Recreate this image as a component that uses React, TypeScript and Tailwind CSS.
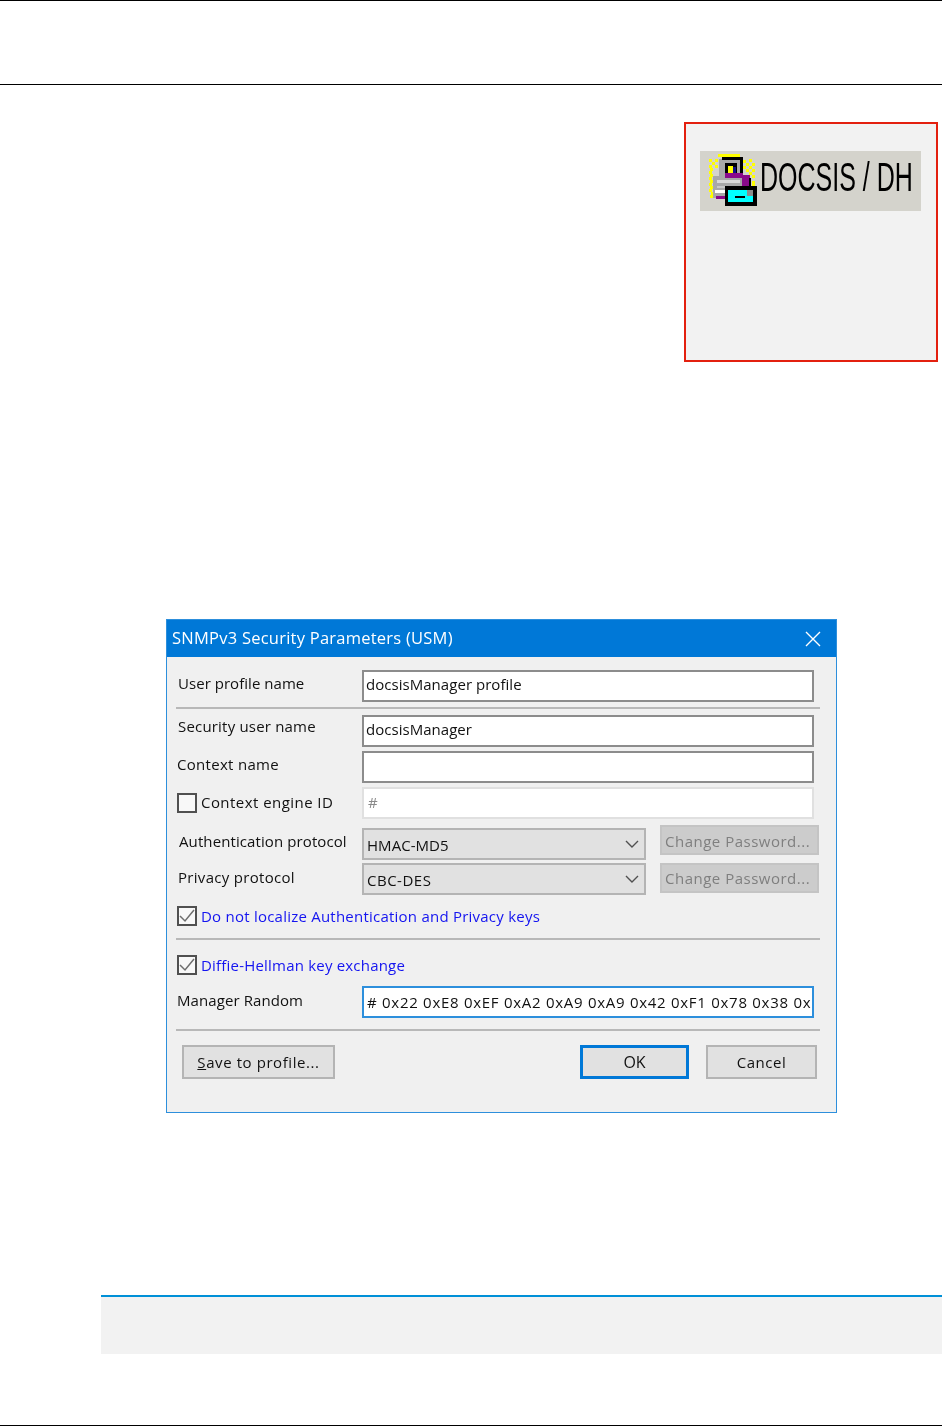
import React from "react";

// yellow halo pixels round the lock icon, in svg units
const halo = [
  [9, 11], [15, 11], [12, 14], [9, 17], [15, 17], [10, 20], [9, 23], [10, 26], [9, 29], [10, 32], [9, 35], [10, 38], [9, 41], [11, 44], [10, 47],
  [43, 12], [49, 11], [46, 15], [52, 15], [43, 18], [49, 18], [46, 21], [52, 21], [49, 24], [52, 27], [52, 33], [52, 36],
];

function LockIcon() {
  return (
    <svg width="50" height="54" viewBox="8 6 50 54" className="shrink-0 blur-[0.4px]" shapeRendering="crispEdges">
      <rect x="18" y="6" width="22" height="3" fill="#ffff00" />
      {halo.map(([x, y]) => (
        <rect key={`${x}-${y}`} x={x} y={y} width="3" height="3" fill="#ffff00" />
      ))}
      <rect x="19" y="11" width="21" height="18" fill="#a8a8a8" />
      <rect x="13" y="28" width="29" height="22" fill="#a8a8a8" />
      <rect x="22" y="9" width="21" height="3" fill="#000000" />
      <rect x="40" y="12" width="3" height="18" fill="#000000" />
      <rect x="25" y="15" width="12" height="12" fill="#000000" />
      <rect x="28" y="18" width="5" height="7" fill="#ffff00" />
      <rect x="33" y="19" width="3" height="6" fill="#10108a" />
      <rect x="25" y="25" width="18" height="5" fill="#8a0a8a" />
      <rect x="42" y="27" width="8" height="15" fill="#8a0a8a" />
      <rect x="49" y="30" width="2" height="10" fill="#000000" />
      <rect x="17" y="32" width="23" height="3" fill="#d8d8d8" />
      <rect x="17" y="38" width="8" height="2" fill="#c8c8c8" />
      <rect x="15" y="42" width="10" height="3" fill="#ffffff" />
      <rect x="16" y="48" width="10" height="3" fill="#8a0a8a" />
      <rect x="25" y="38" width="32" height="20" fill="#000000" />
      <rect x="28" y="42" width="25" height="12" fill="#00ffff" />
      <rect x="47" y="42" width="6" height="6" fill="#8c8c8c" />
      <rect x="35" y="48" width="10" height="2" fill="#000000" />
    </svg>
  );
}

function TextBox({ children, tone = "normal" }: { children?: React.ReactNode; tone?: "normal" | "disabled" | "focus" }) {
  const border = tone === "disabled" ? "border-[#e0e0e0] text-[#8a8a8a]" : tone === "focus" ? "border-[#2d8fdc] text-[#111111]" : "border-[#8c8c8c] text-[#111111]";
  return (
    <div className={`w-[452px] h-[32px] shrink-0 bg-white border-2 pl-[2px] flex items-center overflow-hidden whitespace-nowrap ${border}`}>
      {children}
    </div>
  );
}

function Combo({ children }: { children: React.ReactNode }) {
  return (
    <div className="w-[284px] h-[32px] shrink-0 bg-[#e1e1e1] border-2 border-[#b4b4b4] pl-[3px] pr-[5px] flex items-center justify-between text-[#111111]">
      {children}
      <svg width="14" height="8" viewBox="0 0 14 8" fill="none" stroke="#505050" strokeWidth="1.4">
        <path d="M1 1l6 6 6-6" />
      </svg>
    </div>
  );
}

function Check({ checked = false }: { checked?: boolean }) {
  return (
    <span className="w-[20px] h-[20px] shrink-0 border-2 border-[#505050] bg-[#f8f8f8] flex items-center justify-center">
      {checked && (
        <svg width="16" height="14" viewBox="0 0 16 14" fill="none" stroke="#6e6e6e" strokeWidth="1.5">
          <path d="M1 7l5 5 9-11" />
        </svg>
      )}
    </span>
  );
}

function Rule() {
  return <div className="h-[2px] ml-[9px] mr-[16px] bg-[#b8b8b8]" />;
}

function Disabled({ textClass }: { textClass: string }) {
  return (
    <div className="w-[159px] h-[30px] shrink-0 bg-[#cccccc] border-2 border-[#c4c4c4] pl-[3px] flex items-center text-[#7f7f7f] whitespace-nowrap tracking-[0.5px]">
      <span className={textClass}>Change Password...</span>
    </div>
  );
}

function Button({ children, className }: { children: React.ReactNode; className: string }) {
  return <div className={`h-[34px] bg-[#e1e1e1] flex items-center justify-center text-[#111111] ${className}`}>{children}</div>;
}

function SnmpDialog() {
  return (
    <div className="ml-[166px] mt-[257px] w-[671px] h-[494px] shrink-0 border border-[#2d8fdc] bg-[#f0f0f0] font-['Open_Sans',sans-serif] text-[15px] leading-[20px] blur-[0.45px]">
      <div className="h-[37px] bg-[#0078d7] text-white text-[16.5px] pl-[5px] flex items-center justify-between pr-[15px]">
        <span className="mb-[1px] tracking-[0.24px]">SNMPv3 Security Parameters (USM)</span>
        <svg width="16" height="16" viewBox="0 0 16 16" stroke="#ffffff" strokeWidth="1.4">
          <path d="M1 1l14 14M15 1L1 15" />
        </svg>
      </div>

      <div className="h-[13px]" />
      <div className="flex items-start h-[32px] pl-[11px]">
        <span className="w-[184px] mt-[3px] text-[#111111] tracking-[0.04px]">User profile name</span>
        <TextBox>
          <span className="mb-[4px] tracking-[0.04px]">docsisManager profile</span>
        </TextBox>
      </div>
      <div className="h-[5px]" />
      <Rule />
      <div className="h-[6px]" />
      <div className="flex items-start h-[32px] pl-[11px]">
        <span className="w-[184px] mt-[1px] text-[#111111] tracking-[0.19px]">Security user name</span>
        <TextBox>
          <span className="mb-[4px] tracking-[0.03px]">docsisManager</span>
        </TextBox>
      </div>
      <div className="h-[4px]" />
      <div className="flex items-start h-[32px] pl-[10px]">
        <span className="w-[185px] mt-[3px] text-[#111111] tracking-[0.3px]">Context name</span>
        <TextBox />
      </div>
      <div className="h-[4px]" />
      <div className="flex items-center h-[32px] pl-[10px]">
        <Check />
        <span className="w-[165px] pl-[4px] mb-[2px] text-[#111111] tracking-[0.45px]">Context engine ID</span>
        <TextBox tone="disabled">
          <span className="ml-[2px] mb-[2px]">#</span>
        </TextBox>
      </div>
      <div className="h-[6px]" />
      <div className="flex items-start h-[33px] pl-[12px]">
        <span className="w-[183px] mt-[6px] text-[#111111] tracking-[0.1px]">Authentication protocol</span>
        <div className="mt-[3px]">
          <Combo>
            <span className="mt-[1px] tracking-[0.05px]">HMAC-MD5</span>
          </Combo>
        </div>
        <div className="ml-[14px]">
          <Disabled textClass="mt-[1px]" />
        </div>
      </div>
      <div className="h-[5px]" />
      <div className="flex items-start h-[32px] pl-[11px]">
        <span className="w-[184px] mt-[4px] text-[#111111] tracking-[0.3px]">Privacy protocol</span>
        <Combo>
          <span className="mt-[1px] tracking-[0.5px]">CBC-DES</span>
        </Combo>
        <div className="ml-[14px]">
          <Disabled textClass="mt-0" />
        </div>
      </div>
      <div className="h-[11px]" />
      <div className="flex items-center gap-[4px] h-[20px] pl-[10px] text-[#1414f0]">
        <Check checked />
        <span className="tracking-[0.23px]">Do not localize Authentication and Privacy keys</span>
      </div>
      <div className="h-[12px]" />
      <Rule />
      <div className="h-[15px]" />
      <div className="flex items-center gap-[4px] h-[20px] pl-[10px] text-[#1414f0]">
        <Check checked />
        <span className="tracking-[0.2px]">Diffie-Hellman key exchange</span>
      </div>
      <div className="h-[11px]" />
      <div className="flex items-start h-[32px] pl-[10px]">
        <span className="w-[185px] mt-[4px] text-[#111111] tracking-[0.09px]">Manager Random</span>
        <TextBox tone="focus">
          <span className="ml-[1px] tracking-[0.72px]">
            # 0x22 0xE8 0xEF 0xA2 0xA9 0xA9 0x42 0xF1 0x78 0x38 0x
          </span>
        </TextBox>
      </div>
      <div className="h-[11px]" />
      <Rule />
      <div className="h-[14px]" />
      <div className="flex pl-[15px]">
        <Button className="w-[153px] border-2 border-[#b4b4b4]">
          <span className="tracking-[0.58px]">
            <span className="underline">S</span>ave to profile...
          </span>
        </Button>
        <Button className="w-[109px] ml-[245px] border-[3px] border-[#0078d7]">
          <span className="text-[16px]">OK</span>
        </Button>
        <Button className="w-[111px] ml-[17px] border-2 border-[#b4b4b4]">
          <span className="tracking-[0.5px]">Cancel</span>
        </Button>
      </div>
    </div>
  );
}

export default function App() {
  return (
    <div className="w-[942px] h-[1426px] bg-white flex flex-col overflow-hidden">
      <div className="h-[85px] shrink-0 border-t border-b border-black" />

      <div className="ml-[684px] mt-[37px] w-[254px] h-[240px] shrink-0 border-2 border-[#e3200f] bg-[#f2f2f2] pt-[27px] pl-[14px]">
        <div className="w-[221px] h-[60px] bg-[#d4d3cc] flex items-center pl-[8px] blur-[0.3px]">
          <LockIcon />
          <span className="font-['Liberation_Sans',sans-serif] text-[40px] leading-none text-black whitespace-nowrap origin-left scale-x-[0.625] ml-[2px] mb-[8px]">
            DOCSIS / DH
          </span>
        </div>
      </div>

      <SnmpDialog />

      <div className="ml-[101px] mt-[182px] h-[59px] shrink-0 border-t-2 border-[#0090d7] bg-[#f2f2f2]" />

      <div className="mt-auto h-px shrink-0 bg-black" />
    </div>
  );
}
